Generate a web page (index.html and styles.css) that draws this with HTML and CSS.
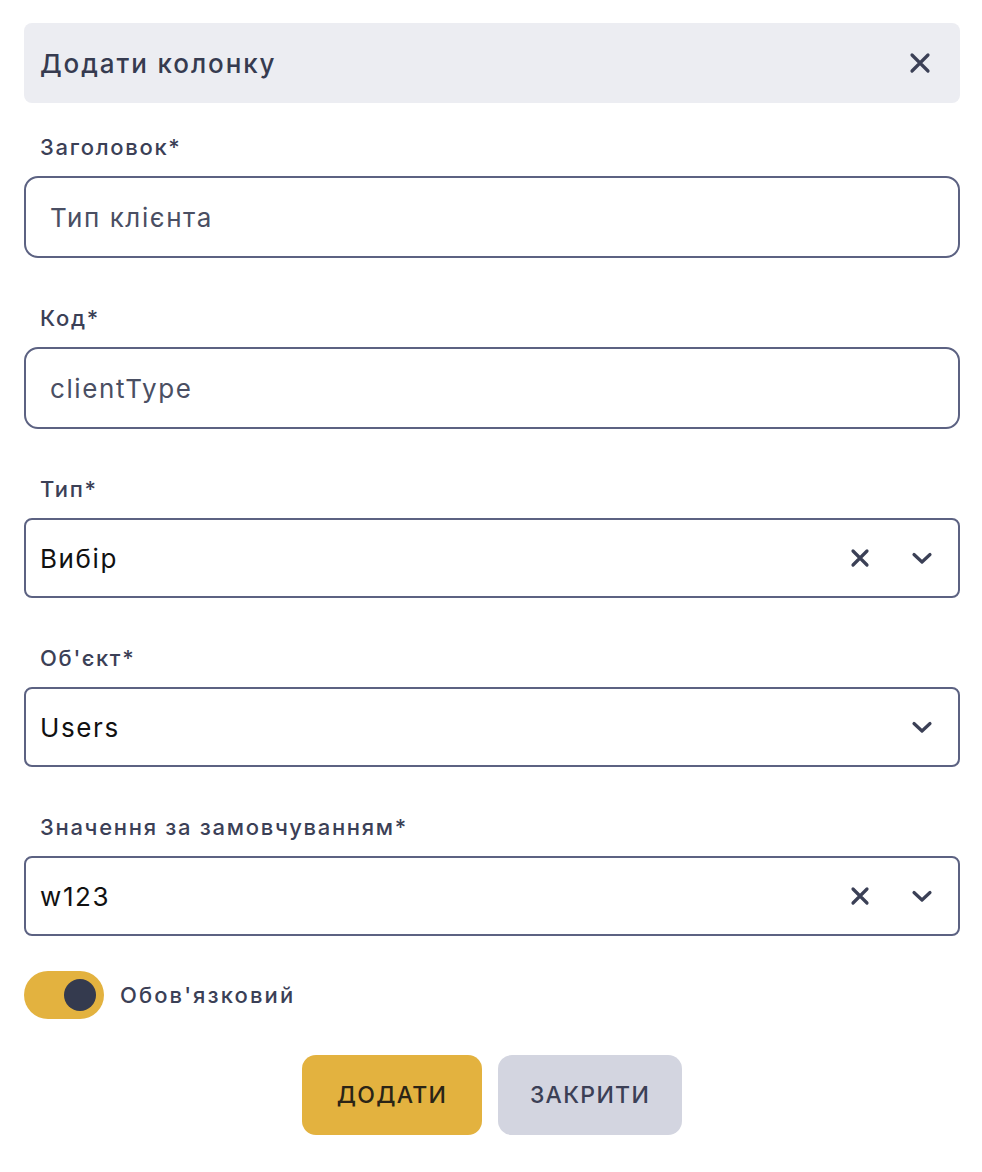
FILE: index.html
```html
<!DOCTYPE html>
<html lang="uk">
<head>
<meta charset="utf-8">
<link rel="stylesheet" href="styles.css">
</head>
<body>
<div class="modal">
  <div class="header">
    <span class="title">Додати колонку</span>
    <svg class="close" width="22" height="22" viewBox="0 0 22 22"><path d="M3 3L19 19M19 3L3 19" stroke="#3b4056" stroke-width="3.2" stroke-linecap="round"/></svg>
  </div>

  <div class="field">
    <label class="label">Заголовок*</label>
    <div class="input">Тип клієнта</div>
  </div>

  <div class="field">
    <label class="label">Код*</label>
    <div class="input">clientType</div>
  </div>

  <div class="field">
    <label class="label">Тип*</label>
    <div class="select">
      <span class="value">Вибір</span>
      <svg class="icon" width="24" height="24" viewBox="0 0 24 24"><path d="M5 5L19 19M19 5L5 19" stroke="#3b4056" stroke-width="3.2" stroke-linecap="round"/></svg>
      <svg class="icon" width="24" height="24" viewBox="0 0 24 24"><path d="M4 8.5L12 16L20 8.5" fill="none" stroke="#3b4056" stroke-width="3.2" stroke-linecap="round" stroke-linejoin="round"/></svg>
    </div>
  </div>

  <div class="field">
    <label class="label">Об'єкт*</label>
    <div class="select">
      <span class="value">Users</span>
      <svg class="icon" width="24" height="24" viewBox="0 0 24 24"><path d="M4 8.5L12 16L20 8.5" fill="none" stroke="#3b4056" stroke-width="3.2" stroke-linecap="round" stroke-linejoin="round"/></svg>
    </div>
  </div>

  <div class="field">
    <label class="label">Значення за замовчуванням*</label>
    <div class="select">
      <span class="value">w123</span>
      <svg class="icon" width="24" height="24" viewBox="0 0 24 24"><path d="M5 5L19 19M19 5L5 19" stroke="#3b4056" stroke-width="3.2" stroke-linecap="round"/></svg>
      <svg class="icon" width="24" height="24" viewBox="0 0 24 24"><path d="M4 8.5L12 16L20 8.5" fill="none" stroke="#3b4056" stroke-width="3.2" stroke-linecap="round" stroke-linejoin="round"/></svg>
    </div>
  </div>

  <div class="toggle-row">
    <div class="toggle"><div class="knob"></div></div>
    <span class="toggle-label">Обов'язковий</span>
  </div>

  <div class="actions">
    <button class="btn btn-primary">ДОДАТИ</button>
    <button class="btn btn-secondary">ЗАКРИТИ</button>
  </div>
</div>
</body>
</html>
```

FILE: styles.css
```css
* { box-sizing: border-box; }
body {
  margin: 0;
  background: #ffffff;
  font-family: "Inter", "Noto Sans", sans-serif;
  color: #3b4056;
}
.modal {
  width: 936px;
  margin: 23px 0 0 24px;
  display: flex;
  flex-direction: column;
}
.header {
  height: 80px;
  background: #ecedf2;
  border-radius: 8px;
  display: flex;
  align-items: center;
  justify-content: space-between;
  padding: 0 29px 0 16px;
}
.title {
  font-size: 26px;
  font-weight: 500;
  letter-spacing: 1.9px;
  color: #363b50;
}
.close { display: block; }
.field {
  display: flex;
  flex-direction: column;
  margin-top: 47px;
}
.header + .field { margin-top: 31px; }
.label {
  font-size: 22px;
  font-weight: 500;
  letter-spacing: 1.7px;
  color: #3b4056;
  padding-left: 16px;
  height: 26px;
  line-height: 26px;
  margin-bottom: 16px;
}
.input {
  height: 82px;
  border: 2px solid #5c6282;
  border-radius: 14px;
  display: flex;
  align-items: center;
  padding-left: 24px;
  font-size: 26px;
  letter-spacing: 1.6px;
  color: #4a4f63;
}
.select {
  height: 80px;
  border: 2px solid #5c6282;
  border-radius: 8px;
  display: flex;
  align-items: center;
  padding: 0 24px 0 14px;
  gap: 38px;
  font-size: 26px;
  letter-spacing: 1.6px;
  color: #111111;
}
.select .value { flex: 1; }
.icon { display: block; }
.toggle-row {
  display: flex;
  align-items: center;
  gap: 16px;
  margin-top: 35px;
}
.toggle {
  width: 80px;
  height: 48px;
  border-radius: 24px;
  background: #e3b23f;
  display: flex;
  align-items: center;
  justify-content: flex-end;
  padding-right: 8px;
}
.knob {
  width: 32px;
  height: 32px;
  border-radius: 50%;
  background: #343a4e;
}
.toggle-label {
  font-size: 22px;
  font-weight: 500;
  letter-spacing: 2.1px;
  color: #3b4056;
}
.actions {
  display: flex;
  justify-content: center;
  gap: 16px;
  margin-top: 36px;
}
.btn {
  height: 80px;
  border: none;
  border-radius: 14px;
  font-family: inherit;
  font-size: 23px;
  font-weight: 500;
  letter-spacing: 1.3px;
  padding: 0;
}
.btn-primary {
  width: 180px;
  background: #e3b23f;
  color: #2a2416;
}
.btn-secondary {
  width: 184px;
  background: #d3d5e0;
  color: #3b4056;
}
```
